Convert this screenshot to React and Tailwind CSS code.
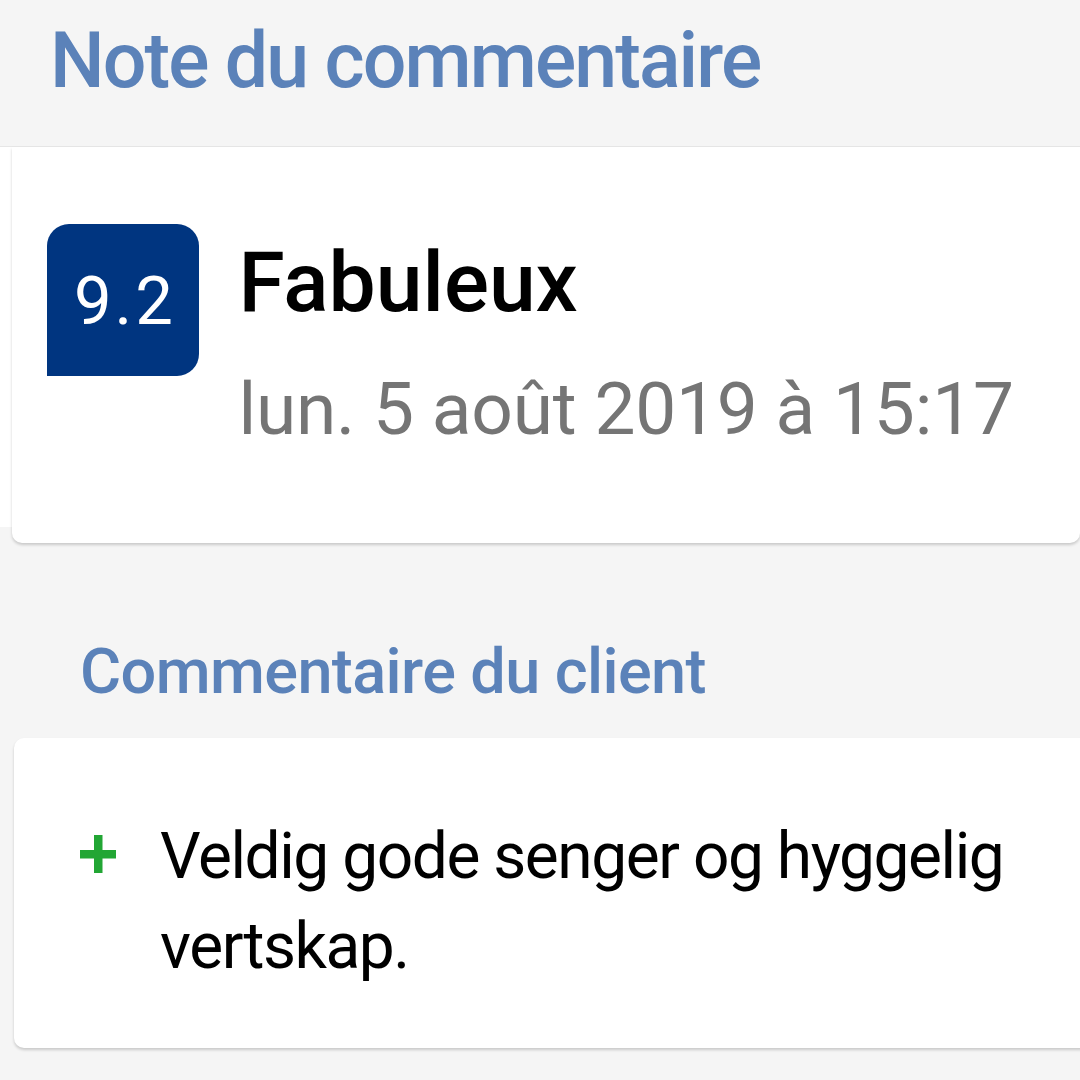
export default function App() {
  return (
    <div
      className="w-[1080px] h-[1080px] overflow-hidden bg-[#f5f5f5]"
      style={{ fontFamily: 'Roboto, "Noto Sans", sans-serif' }}
    >
      {/* Section header */}
      <div className="h-[147px] border-b border-[#e6e6e6] pl-[50px] pt-[16px]">
        <h1 className="text-[77px] leading-[90px] font-medium text-[#5b82b9] tracking-[-1.9px]">
          Note du commentaire
        </h1>
      </div>

      {/* Score card */}
      <div className="flex">
        <div className="w-[14px] h-[380px] bg-white" />
        <div className="w-[1200px] h-[396px] bg-white rounded-b-[10px] shadow-[0_2px_3px_rgba(0,0,0,0.18)] flex pl-[33px] pt-[77px]">
          <div className="w-[152px] h-[152px] ml-[2px] bg-[#003580] rounded-t-[22px] rounded-br-[22px] flex items-center justify-center">
            <span className="text-white text-[67px] leading-none mt-[2px] tracking-[3px] pl-[3px]">9.2</span>
          </div>
          <div className="ml-[39px] pt-[14px]">
            <div className="text-[84px] leading-[90px] font-medium text-black">Fabuleux</div>
            <div className="text-[73px] leading-[84px] text-[#757575] mt-[39px] tracking-[-0.2px]">
              lun. 5 août 2019 à 15:17
            </div>
          </div>
        </div>
      </div>

      {/* Client comment */}
      <div className="pl-[80px] pt-[92px] h-[195px]">
        <h2 className="text-[63px] leading-[74px] font-medium text-[#5b82b9] tracking-[-0.6px]">
          Commentaire du client
        </h2>
      </div>

      <div className="ml-[14px] w-[1200px] h-[310px] bg-white rounded-[10px] shadow-[0_2px_3px_rgba(0,0,0,0.18)] flex pl-[66px] pt-[74px]">
        <div className="w-[80px] pt-[23px]">
          <svg width="36" height="38" viewBox="0 0 36 38">
            <rect x="14" y="0" width="8.5" height="38" fill="#22a634" />
            <rect x="0" y="15" width="36" height="8.5" fill="#22a634" />
          </svg>
        </div>
        <p className="text-[64px] leading-[90px] text-black tracking-[-1.45px] w-[900px]">
          Veldig gode senger og hyggelig vertskap.
        </p>
      </div>
    </div>
  );
}
